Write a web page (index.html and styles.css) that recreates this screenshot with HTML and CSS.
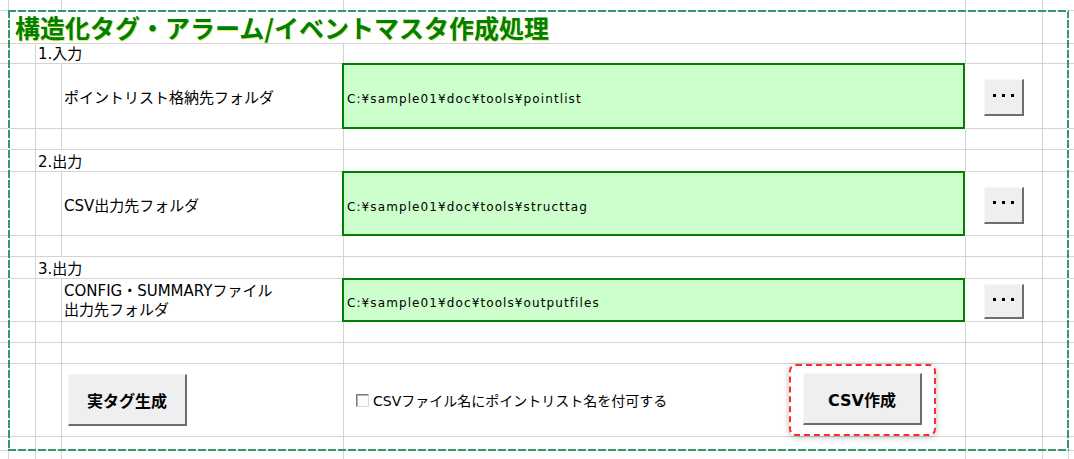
FILE: index.html
```html
<!DOCTYPE html>
<html lang="ja">
<head>
<meta charset="utf-8">
<title>構造化タグ・アラーム/イベントマスタ作成処理</title>
<link rel="stylesheet" href="styles.css">
</head>
<body>
<div class="sheet">
  <div class="row h11">
    <div class="c"></div><div class="c s2"></div><div class="c"></div><div class="c"></div><div class="c"></div><div class="c s2 end"></div>
  </div>
  <div class="row h32">
    <div class="c"></div>
    <div class="c s4 title">構造化タグ・アラーム/イベントマスタ作成処理</div>
    <div class="c"></div><div class="c"></div><div class="c end"></div>
  </div>
  <div class="row h21">
    <div class="c"></div><div class="c"></div>
    <div class="c s2 sec">1.入力</div>
    <div class="c"></div><div class="c"></div><div class="c"></div><div class="c end"></div>
  </div>
  <div class="row h65">
    <div class="c"></div><div class="c"></div><div class="c"></div>
    <div class="c label">ポイントリスト格納先フォルダ</div>
    <div class="field">C:¥sample01¥doc¥tools¥pointlist</div>
    <div class="c cell-btn"><button class="btn dots" type="button"><i></i><i></i><i></i></button></div>
    <div class="c"></div><div class="c end"></div>
  </div>
  <div class="row h21">
    <div class="c"></div><div class="c"></div><div class="c"></div><div class="c"></div><div class="c"></div><div class="c"></div><div class="c"></div><div class="c end"></div>
  </div>
  <div class="row h22">
    <div class="c"></div><div class="c"></div>
    <div class="c s2 sec">2.出力</div>
    <div class="c"></div><div class="c"></div><div class="c"></div><div class="c end"></div>
  </div>
  <div class="row h64">
    <div class="c"></div><div class="c"></div><div class="c"></div>
    <div class="c label">CSV出力先フォルダ</div>
    <div class="field">C:¥sample01¥doc¥tools¥structtag</div>
    <div class="c cell-btn"><button class="btn dots" type="button"><i></i><i></i><i></i></button></div>
    <div class="c"></div><div class="c end"></div>
  </div>
  <div class="row h21">
    <div class="c"></div><div class="c"></div><div class="c"></div><div class="c"></div><div class="c"></div><div class="c"></div><div class="c"></div><div class="c end"></div>
  </div>
  <div class="row h22">
    <div class="c"></div><div class="c"></div>
    <div class="c s2 sec">3.出力</div>
    <div class="c"></div><div class="c"></div><div class="c"></div><div class="c end"></div>
  </div>
  <div class="row h43">
    <div class="c"></div><div class="c"></div><div class="c"></div>
    <div class="c label two">CONFIG・SUMMARYファイル<br>出力先フォルダ</div>
    <div class="field">C:¥sample01¥doc¥tools¥outputfiles</div>
    <div class="c cell-btn"><button class="btn dots small" type="button"><i></i><i></i><i></i></button></div>
    <div class="c"></div><div class="c end"></div>
  </div>
  <div class="row h21">
    <div class="c"></div><div class="c"></div><div class="c"></div><div class="c"></div><div class="c"></div><div class="c"></div><div class="c"></div><div class="c end"></div>
  </div>
  <div class="row h21">
    <div class="c"></div><div class="c"></div><div class="c"></div><div class="c"></div><div class="c"></div><div class="c"></div><div class="c"></div><div class="c end"></div>
  </div>
  <div class="row h66">
    <div class="c"></div><div class="c"></div><div class="c"></div>
    <div class="c actions"><button class="btn big" type="button">実タグ生成</button></div>
    <div class="c actions">
      <label class="chk"><span class="box"></span>CSVファイル名にポイントリスト名を付可する</label>
      <div class="highlight"><button class="btn big" type="button">CSV作成</button></div>
    </div>
    <div class="c"></div><div class="c"></div><div class="c end"></div>
  </div>
  <div class="row h21">
    <div class="c"></div><div class="c"></div><div class="c"></div><div class="c"></div><div class="c"></div><div class="c"></div><div class="c"></div><div class="c end"></div>
  </div>
  <div class="row h8">
    <div class="c"></div><div class="c"></div><div class="c"></div><div class="c"></div><div class="c"></div><div class="c"></div><div class="c"></div><div class="c end"></div>
  </div>
  <div class="marquee"></div>
</div>
</body>
</html>
```

FILE: styles.css
```css
* { box-sizing: border-box; }

html, body {
  margin: 0;
  padding: 0;
  background: #ffffff;
}

body {
  width: 1074px;
  height: 459px;
  overflow: hidden;
  font-family: "DejaVu Sans", "Noto Sans CJK JP", sans-serif;
  color: #000;
}

.sheet {
  position: relative;
  width: 1074px;
}

.row {
  display: grid;
  grid-template-columns: 9px 27px 26px 282px 622px 77px 26px 5px;
  grid-template-rows: 1fr;
}

.h8 { height: 8px; }
.h11 { height: 11px; }
.h21 { height: 21px; }
.h22 { height: 22px; }
.h32 { height: 32px; }
.h43 { height: 43px; }
.h64 { height: 64px; }
.h65 { height: 65px; }
.h66 { height: 66px; }

.c {
  min-width: 0;
  border-right: 1px solid #d4d4d4;
  border-bottom: 1px solid #d4d4d4;
  display: flex;
  align-items: center;
}

.c.end { border-right: 0; }
.h8 .c { border-bottom: 0; }

.s2 { grid-column: span 2; }
.s4 { grid-column: span 4; }

.title {
  padding-left: 6px;
  font-family: "Noto Sans CJK JP", sans-serif;
  font-weight: 700;
  font-size: 25px;
  line-height: 32px;
  color: #008000;
  white-space: nowrap;
  text-shadow: 1px 1px 0 rgba(210, 210, 0, 0.55);
}

.sec {
  align-items: flex-end;
  padding-left: 2px;
  font-size: 15px;
  line-height: 18px;
  white-space: nowrap;
}

.label {
  padding-left: 2px;
  padding-top: 4px;
  font-size: 15px;
  line-height: 18px;
  white-space: nowrap;
}

.label.two {
  padding-top: 2px;
  line-height: 19px;
}

.field {
  margin: -1px 1px 0 -2px;
  border: 2px solid #008000;
  background: #ccffcc;
  display: flex;
  align-items: center;
  padding: 6px 0 0 3px;
  font-size: 12px;
  letter-spacing: 1.1px;
  white-space: nowrap;
}

.cell-btn {
  justify-content: center;
}

.btn {
  margin: 0;
  padding: 0;
  font: inherit;
  color: #000;
  background: #efefef;
  border-style: solid;
  border-width: 1px 2px 2px 1px;
  border-color: #f7f7f7 #6e6e6e #6e6e6e #f7f7f7;
  border-radius: 0;
  display: flex;
  align-items: center;
  justify-content: center;
}

.dots {
  width: 40px;
  height: 37px;
  margin-top: 3px;
  gap: 6px;
  padding-bottom: 4px;
}

.dots.small {
  height: 35px;
}

.dots i {
  display: block;
  width: 3px;
  height: 3px;
  background: #000;
}

.actions {
  align-items: center;
}

.big {
  width: 119px;
  height: 52px;
  font-size: 16px;
  font-weight: 700;
  flex: none;
}

.actions > .big {
  margin-left: 6px;
}

.chk {
  display: flex;
  align-items: center;
  gap: 4px;
  margin-left: 12px;
  font-size: 14px;
  white-space: nowrap;
}

.chk .box {
  width: 13px;
  height: 13px;
  background: #fbfbfb;
  border: 1px solid;
  border-color: #7a7a7a #d8d8d8 #d8d8d8 #7a7a7a;
  box-shadow: inset 1px 1px 0 #b4b4b4;
}

.highlight {
  position: relative;
  z-index: 1;
  margin-left: auto;
  margin-right: 29px;
  flex: none;
  width: 147px;
  height: 72px;
  padding: 7px 12px 9px;
  border: 2px dashed #ff2a2a;
  border-radius: 7px;
  background: #fff;
  box-shadow: 0 1px 6px rgba(0, 0, 0, 0.28);
}

.marquee {
  position: absolute;
  left: 8px;
  top: 10px;
  width: 1061px;
  height: 441px;
  pointer-events: none;
  background:
    repeating-linear-gradient(90deg, #339966 0 8px, #e4f1ea 8px 10px) left top / 100% 2px no-repeat,
    repeating-linear-gradient(90deg, #339966 0 8px, #e4f1ea 8px 10px) left bottom / 100% 2px no-repeat,
    repeating-linear-gradient(180deg, #339966 0 8px, #e4f1ea 8px 10px) left top / 2px 100% no-repeat,
    repeating-linear-gradient(180deg, #339966 0 8px, #e4f1ea 8px 10px) right top / 2px 100% no-repeat;
}
```
